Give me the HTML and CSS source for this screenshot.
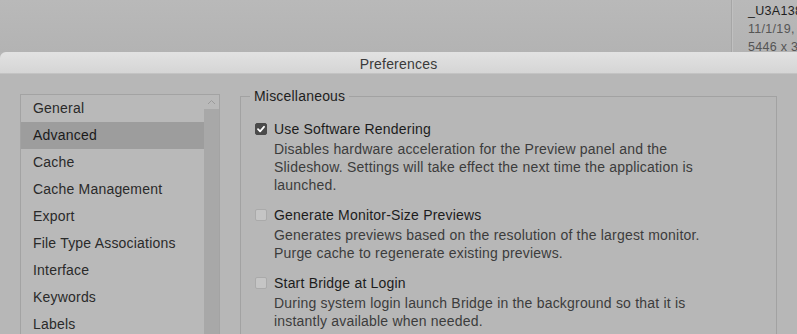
FILE: index.html
```html
<!DOCTYPE html>
<html lang="en">
  <head>
    <meta charset="UTF-8" />
    <meta name="viewport" content="width=device-width, initial-scale=1.0" />
    <title>Preferences</title>
    <link rel="stylesheet" href="styles.css">
  </head>
  <body>
    <div class="backdrop">
      <div class="backdrop-main"></div>
      <div class="meta">
        <div class="meta-name">_U3A138</div>
        <div class="meta-line">11/1/19, 1</div>
        <div class="meta-line">5446 x 3</div>
      </div>
    </div>

    <div class="dialog">
      <div class="titlebar">Preferences</div>
      <div class="dialog-body">
        <div class="sidebar">
          <ul class="nav">
            <li>General</li>
            <li class="active">Advanced</li>
            <li>Cache</li>
            <li>Cache Management</li>
            <li>Export</li>
            <li>File Type Associations</li>
            <li>Interface</li>
            <li>Keywords</li>
            <li>Labels</li>
          </ul>
          <div class="scrollbar">
            <div class="scroll-up">
              <svg width="9" height="6" viewBox="0 0 9 6"><path d="M1 5 L4.5 1.5 L8 5" fill="none" stroke="#9a9a9a" stroke-width="1"/></svg>
            </div>
            <div class="scroll-track"></div>
          </div>
        </div>

        <fieldset class="group">
          <legend>Miscellaneous</legend>

          <div class="option">
            <div class="option-head">
              <span class="check checked">
                <svg width="10" height="10" viewBox="0 0 10 10"><path d="M2 5.2 L4.1 7.3 L8 2.8" fill="none" stroke="#fff" stroke-width="1.8" stroke-linecap="round" stroke-linejoin="round"/></svg>
              </span>
              <span class="option-label">Use Software Rendering</span>
            </div>
            <p class="option-desc">Disables hardware acceleration for the Preview panel and the Slideshow. Settings will take effect the next time the application is launched.</p>
          </div>

          <div class="option">
            <div class="option-head">
              <span class="check"></span>
              <span class="option-label">Generate Monitor-Size Previews</span>
            </div>
            <p class="option-desc">Generates previews based on the resolution of the largest monitor. Purge cache to regenerate existing previews.</p>
          </div>

          <div class="option">
            <div class="option-head">
              <span class="check"></span>
              <span class="option-label">Start Bridge at Login</span>
            </div>
            <p class="option-desc">During system login launch Bridge in the background so that it is instantly available when needed.</p>
          </div>
        </fieldset>
      </div>
    </div>
  </body>
</html>
```

FILE: styles.css
```css
html,
body {
  margin: 0;
  height: 334px;
  overflow: hidden;
}

body {
  background-color: #b6b6b6;
  font-family: "Liberation Sans", Arial, sans-serif;
  font-size: 14px;
  letter-spacing: 0.2px;
  color: #222;
}

/* window behind the dialog */
.backdrop {
  display: flex;
  height: 52px;
  overflow: hidden;
  background: linear-gradient(#b9b9b9, #b3b3b3);
}
.backdrop-main {
  flex: 1;
}
.meta {
  width: 49px;
  padding: 2px 0 0 16px;
  border-left: 1px solid #a6a6a6;
  box-shadow: inset 1px 0 0 #c0c0c0;
  white-space: nowrap;
  font-size: 12.5px;
  line-height: 18px;
  letter-spacing: 0.3px;
}
.meta-name {
  color: #1e1e1e;
}
.meta-line {
  color: #555;
}

/* dialog */
.dialog {
  height: 282px;
  background-color: #b7b7b7;
  border-top-left-radius: 6px;
  overflow: hidden;
}
.titlebar {
  height: 21px;
  line-height: 24px;
  text-align: center;
  color: #3a3a3a;
  background: linear-gradient(#e2e2e2, #d5d5d5);
  border-bottom: 1px solid #c3c3c3;
}
.dialog-body {
  display: flex;
  align-items: flex-start;
  gap: 20px;
  padding: 12px 20px 0 20px;
}

/* left list */
.sidebar {
  display: flex;
  width: 198px;
  height: 260px;
  margin-top: 8px;
  border: 1px solid #a3a3a3;
  background-color: #b9b9b9;
}
.nav {
  flex: 1;
  list-style: none;
  margin: 0;
  padding: 0;
}
.nav li {
  height: 27px;
  line-height: 27px;
  padding-left: 12px;
  color: #2a2a2a;
}
.nav li.active {
  background-color: #9d9d9d;
  color: #1a1a1a;
}
.scrollbar {
  display: flex;
  flex-direction: column;
  width: 15px;
}
.scroll-up {
  height: 14px;
  display: flex;
  justify-content: center;
  align-items: center;
}
.scroll-track {
  flex: 1;
  background-color: #a8a8a8;
}

/* options group */
.group {
  flex: 1;
  margin: 0;
  padding: 13px 14px 0 14px;
  border: 1px solid #a2a2a2;
  min-height: 260px;
}
.group legend {
  padding: 0 4px;
  margin-left: -5px;
  line-height: 20px;
  color: #1e1e1e;
}
.option {
  margin-bottom: 11px;
}
.option-head {
  display: flex;
  align-items: center;
  gap: 7px;
  height: 20px;
}
.option-label {
  color: #1c1c1c;
}
.check {
  box-sizing: border-box;
  width: 12px;
  height: 12px;
  border-radius: 2px;
  border: 1px solid #aaa;
  background-color: #c5c5c5;
  display: flex;
  align-items: center;
  justify-content: center;
}
.check.checked {
  background-color: #4a4a4a;
  border-color: #4a4a4a;
}
.option-desc {
  margin: 1px 0 0 19px;
  max-width: 450px;
  line-height: 18px;
  color: #3c3c3c;
}
```
